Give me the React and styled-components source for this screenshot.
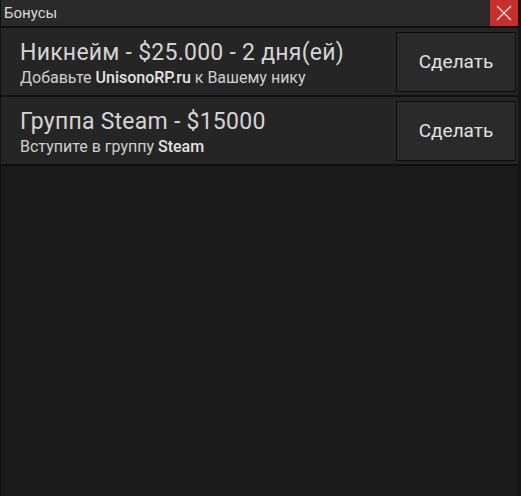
import styled, { createGlobalStyle } from "styled-components"

const Global = createGlobalStyle`
    html, body {
        margin: 0;
        padding: 0;
        background: #1b1b1b;
    }
    * { box-sizing: border-box; }
`

const Window = styled.div`
    width: 521px;
    height: 496px;
    display: flex;
    flex-direction: column;
    background: #1b1b1b;
    border-left: 1px solid #111;
    border-right: 3px solid #151515;
    font-family: Roboto, "Liberation Sans", sans-serif;
    color: #d6d6d6;
`

const TitleBar = styled.div`
    height: 28px;
    display: flex;
    justify-content: space-between;
    background: #2a2a2a;
    border-bottom: 2px solid #0f0f0f;
`

const Title = styled.span`
    padding-left: 3px;
    font-size: 15px;
    line-height: 26px;
    color: #dadada;
`

const Close = styled.button`
    width: 28px;
    height: 26px;
    border: none;
    padding: 0;
    background: #c9302c;
    display: flex;
    align-items: center;
    justify-content: center;
    cursor: pointer;
`

const List = styled.div`
    display: flex;
    flex-direction: column;
`

const Row = styled.div`
    height: 69px;
    display: flex;
    align-items: center;
    padding: 4px 2px 4px 19px;
    background: #252525;
    border-bottom: 2px solid #0f0f0f;
`

const Info = styled.div`
    flex: 1;
    align-self: flex-start;
    display: flex;
    flex-direction: column;
    padding-top: 7px;
`

const Name = styled.div`
    font-size: 23px;
    line-height: 27px;
    letter-spacing: 0.25px;
    color: #d4d4d4;
`

const Desc = styled.div`
    margin-top: 3px;
    font-size: 16px;
    line-height: 18px;
    color: #cfcfcf;

    b {
        font-weight: 500;
        color: #e2e2e2;
    }
`

const Botao = styled.button`
    width: 120px;
    height: 60px;
    background: #2a2a2a;
    border: 1px solid #0c0c0c;
    color: #e0e0e0;
    font-family: inherit;
    font-size: 19px;
    cursor: pointer;
`

const bonuses = [
    {
        name: "Никнейм - $25.000 - 2 дня(ей)",
        desc: <>Добавьте <b>UnisonoRP.ru</b> к Вашему нику</>,
    },
    {
        name: "Группа Steam - $15000",
        desc: <>Вступите в группу <b>Steam</b></>,
    },
]

export default function App() {
    return (
        <>
            <Global />
            <Window>
                <TitleBar>
                    <Title>Бонусы</Title>
                    <Close>
                        <svg width="16" height="16" viewBox="0 0 16 16">
                            <path d="M1 1L15 15M15 1L1 15" stroke="#f2dede" strokeWidth="1.3" />
                        </svg>
                    </Close>
                </TitleBar>
                <List>
                    {bonuses.map((b, i) => (
                        <Row key={i}>
                            <Info>
                                <Name>{b.name}</Name>
                                <Desc>{b.desc}</Desc>
                            </Info>
                            <Botao>Сделать</Botao>
                        </Row>
                    ))}
                </List>
            </Window>
        </>
    )
}
